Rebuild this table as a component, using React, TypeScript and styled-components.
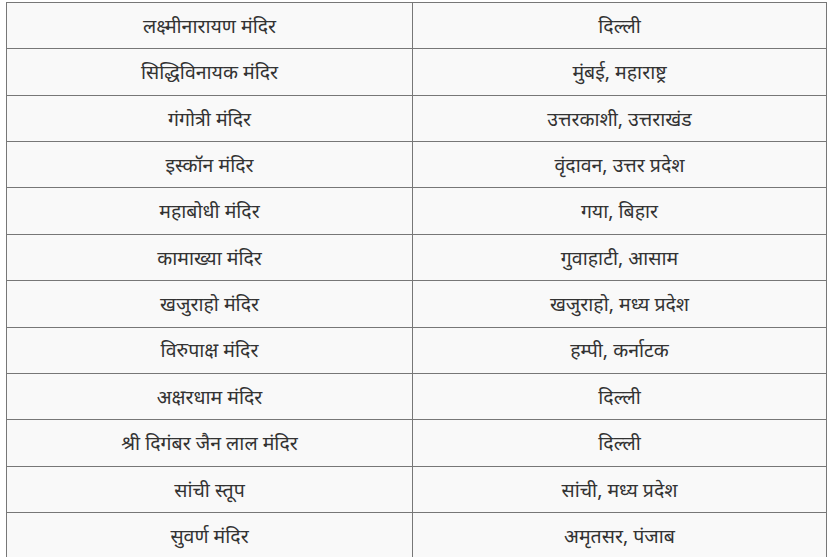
import styled, { createGlobalStyle } from "styled-components";

const GlobalStyle = createGlobalStyle`
  body {
    margin: 0;
    background: #ffffff;
  }
`;

const Wrapper = styled.div`
  padding: 2px 0 0 6px;
  font-family: "Noto Sans", "Liberation Sans", sans-serif;
`;

const Table = styled.table`
  width: 821px;
  border-collapse: collapse;
  table-layout: fixed;
  background: #f9f9f9;
  color: #333333;
  font-size: 19.5px;
`;

const NameCol = styled.col`
  width: 406px;
`;

const Cell = styled.td`
  height: 45.36px;
  padding: 0;
  border: 1px solid #777777;
  text-align: center;
  vertical-align: middle;
  line-height: 1.1;
`;

type Temple = {
  name: string;
  place: string;
};

const temples: Temple[] = [
  { name: "लक्ष्मीनारायण मंदिर", place: "दिल्ली" },
  { name: "सिद्धिविनायक मंदिर", place: "मुंबई, महाराष्ट्र" },
  { name: "गंगोत्री मंदिर", place: "उत्तरकाशी, उत्तराखंड" },
  { name: "इस्कॉन मंदिर", place: "वृंदावन, उत्तर प्रदेश" },
  { name: "महाबोधी मंदिर", place: "गया, बिहार" },
  { name: "कामाख्या मंदिर", place: "गुवाहाटी, आसाम" },
  { name: "खजुराहो मंदिर", place: "खजुराहो, मध्य प्रदेश" },
  { name: "विरुपाक्ष मंदिर", place: "हम्पी, कर्नाटक" },
  { name: "अक्षरधाम मंदिर", place: "दिल्ली" },
  { name: "श्री दिगंबर जैन लाल मंदिर", place: "दिल्ली" },
  { name: "सांची स्तूप", place: "सांची, मध्य प्रदेश" },
  { name: "सुवर्ण मंदिर", place: "अमृतसर, पंजाब" },
];

export default function App() {
  return (
    <>
      <GlobalStyle />
      <Wrapper>
        <Table>
          <colgroup>
            <NameCol />
            <col />
          </colgroup>
          <tbody>
            {temples.map((t) => (
              <tr key={t.name}>
                <Cell>{t.name}</Cell>
                <Cell>{t.place}</Cell>
              </tr>
            ))}
          </tbody>
        </Table>
      </Wrapper>
    </>
  );
}
